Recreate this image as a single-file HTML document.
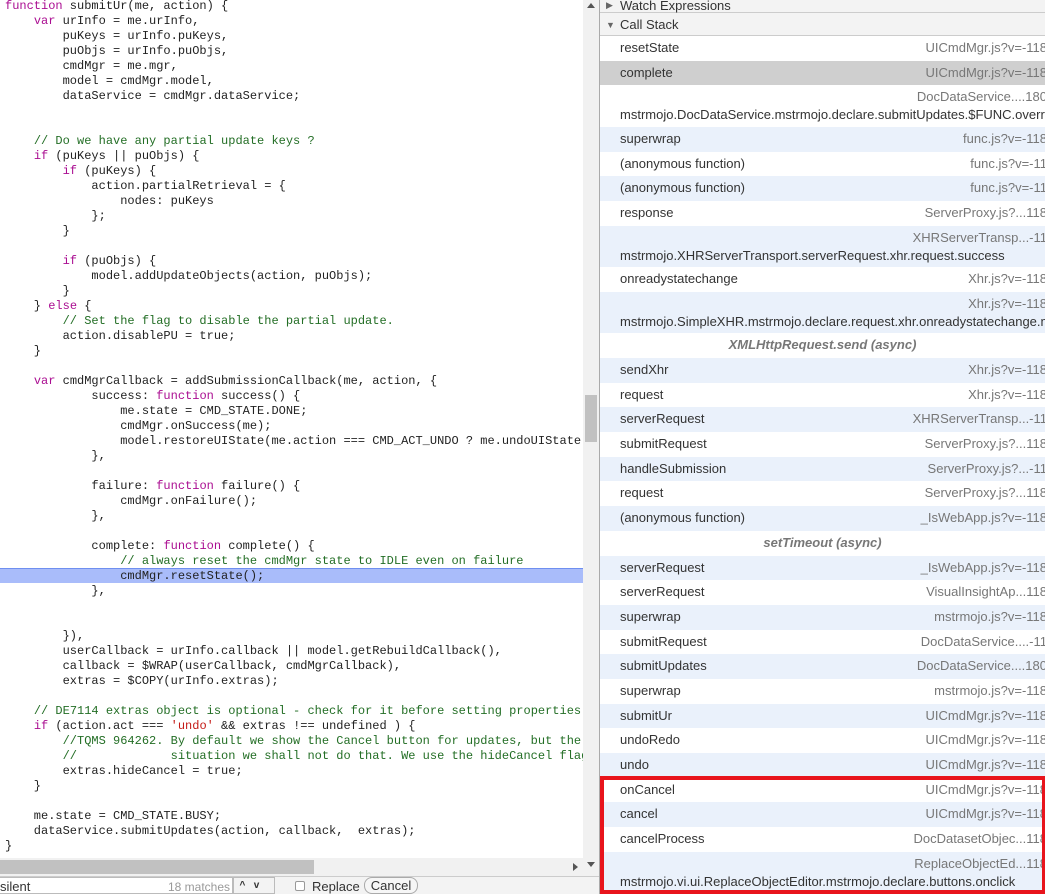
<!DOCTYPE html>
<html><head><meta charset="utf-8"><style>
*{margin:0;padding:0;box-sizing:border-box}
body{width:1045px;height:894px;overflow:hidden;background:#fff;position:relative;font-family:"Liberation Sans",sans-serif}
#code{position:absolute;left:0;top:0;width:583px;height:858px;overflow:hidden}
pre{position:absolute;left:5px;top:-1.5px;font:12px/15px "Liberation Mono",monospace;color:#222;white-space:pre}
.k{color:#aa0d91}.c{color:#236e25}.s{color:#c41a16}
#hl{position:absolute;left:0;top:568px;width:583px;height:15px;background:#a9bcfa;border-top:1px solid #6f8ff0}
#vs{position:absolute;left:583px;top:0;width:16px;height:876px;background:#f1f1f1}
#vs .t{position:absolute;left:2px;top:395px;width:12px;height:47px;background:#c1c1c1}
#hs{position:absolute;left:0;top:858px;width:583px;height:18px;background:#f1f1f1}
#hs .t{position:absolute;left:0;top:2px;width:314px;height:14px;background:#c1c1c1}
#sb{position:absolute;left:0;top:876px;width:599px;height:18px;background:#f3f3f3;border-top:1px solid #ccc;font-size:12px;color:#333}
#panel{position:absolute;left:599px;top:0;width:446px;height:894px;border-left:1px solid #aaa;font-size:13px;color:#333}
.hd{height:13px;background:#f3f3f3;border-bottom:1px solid #ccc;padding-left:20px;line-height:11px;position:relative}
.hd2{height:23px;background:#f3f3f3;border-bottom:1px solid #ccc;padding-left:20px;line-height:24px;position:relative}
.r{position:relative;height:24.7px;line-height:24.7px;padding-left:20px;white-space:nowrap;overflow:hidden}
.r .f{position:absolute;right:-2px;top:0;color:#777}
.d{position:relative;height:41.5px;white-space:nowrap;overflow:hidden}
.d .f{position:absolute;right:-2px;top:3px;color:#777;line-height:18px}
.d .n{position:absolute;left:20px;top:21px;line-height:18px}
.b{background:#eaf1fb}.w{background:#fff}.g{background:#cfcfcf}
.a{text-align:center;color:#777;font-style:italic;font-weight:bold;padding-left:0}
#red{position:absolute;left:600px;top:776px;width:445px;height:118px;border:4px solid #e8141c;border-right-width:3px}
</style></head><body>
<div id="code">
<div id="hl"></div>
<pre><span class="k">function</span> submitUr(me, action) {
    <span class="k">var</span> urInfo = me.urInfo,
        puKeys = urInfo.puKeys,
        puObjs = urInfo.puObjs,
        cmdMgr = me.mgr,
        model = cmdMgr.model,
        dataService = cmdMgr.dataService;


    <span class="c">// Do we have any partial update keys ?</span>
    <span class="k">if</span> (puKeys || puObjs) {
        <span class="k">if</span> (puKeys) {
            action.partialRetrieval = {
                nodes: puKeys
            };
        }

        <span class="k">if</span> (puObjs) {
            model.addUpdateObjects(action, puObjs);
        }
    } <span class="k">else</span> {
        <span class="c">// Set the flag to disable the partial update.</span>
        action.disablePU = true;
    }

    <span class="k">var</span> cmdMgrCallback = addSubmissionCallback(me, action, {
            success: <span class="k">function</span> success() {
                me.state = CMD_STATE.DONE;
                cmdMgr.onSuccess(me);
                model.restoreUIState(me.action === CMD_ACT_UNDO ? me.undoUIState : me.redoUIState);
            },

            failure: <span class="k">function</span> failure() {
                cmdMgr.onFailure();
            },

            complete: <span class="k">function</span> complete() {
                <span class="c">// always reset the cmdMgr state to IDLE even on failure</span>
                cmdMgr.resetState();
            },


        }),
        userCallback = urInfo.callback || model.getRebuildCallback(),
        callback = $WRAP(userCallback, cmdMgrCallback),
        extras = $COPY(urInfo.extras);

    <span class="c">// DE7114 extras object is optional - check for it before setting properties</span>
    <span class="k">if</span> (action.act === <span class="s">'undo'</span> &amp;&amp; extras !== undefined ) {
        <span class="c">//TQMS 964262. By default we show the Cancel button for updates, but the</span>
        <span class="c">//             situation we shall not do that. We use the hideCancel flag</span>
        extras.hideCancel = true;
    }

    me.state = CMD_STATE.BUSY;
    dataService.submitUpdates(action, callback,  extras);
}</pre>
</div>
<div id="vs"><div style="position:absolute;left:4px;top:3px;border:4px solid transparent;border-bottom:5px solid #555;border-top:0"></div><div class="t"></div><div style="position:absolute;left:4px;top:862px;border:4px solid transparent;border-top:5px solid #555;border-bottom:0"></div></div>
<div id="hs"><div class="t"></div><div style="position:absolute;left:573px;top:5px;border:4px solid transparent;border-left:5px solid #555;border-right:0"></div></div>
<div id="sb">
<div style="position:absolute;left:0;top:0;width:233px;height:17px;background:#fff;border:1px solid #bbb;border-left:0"></div>
<span style="position:absolute;left:0;top:2px;font-size:13px">silent</span>
<span style="position:absolute;left:168px;top:3px;color:#999">18 matches</span>
<div style="position:absolute;left:233px;top:0;width:42px;height:17px;border:1px solid #bbb;background:#f3f3f3;font-size:10px;line-height:15px;font-weight:bold">&nbsp;&nbsp;^&nbsp;&nbsp;&nbsp;v</div>
<div style="position:absolute;left:295px;top:4px;width:10px;height:10px;border:1px solid #999;border-radius:2px;background:#fff"></div>
<span style="position:absolute;left:312px;top:2px;font-size:13px">Replace</span>
<div style="position:absolute;left:364px;top:0;width:54px;height:17px;border:1px solid #aaa;border-radius:8px;font-size:13px;text-align:center;line-height:15px;background:#f6f6f6">Cancel</div>
</div>
<div id="panel">
<div class="hd"><span style="position:absolute;left:6px;font-size:9px;color:#666">&#9654;</span>Watch Expressions</div>
<div class="hd2"><span style="position:absolute;left:6px;font-size:9px;color:#666">&#9660;</span>Call Stack</div>
<div class="r w">resetState<span class="f">UICmdMgr.js?v=-118</span></div>
<div class="r g">complete<span class="f">UICmdMgr.js?v=-118</span></div>
<div class="d w"><span class="f">DocDataService....180</span><span class="n">mstrmojo.DocDataService.mstrmojo.declare.submitUpdates.$FUNC.overriding</span></div>
<div class="r b">superwrap<span class="f">func.js?v=-118</span></div>
<div class="r w">(anonymous function)<span class="f">func.js?v=-11</span></div>
<div class="r b">(anonymous function)<span class="f">func.js?v=-11</span></div>
<div class="r w">response<span class="f">ServerProxy.js?...118</span></div>
<div class="d b"><span class="f">XHRServerTransp...-11</span><span class="n">mstrmojo.XHRServerTransport.serverRequest.xhr.request.success</span></div>
<div class="r w">onreadystatechange<span class="f">Xhr.js?v=-118</span></div>
<div class="d b"><span class="f">Xhr.js?v=-118</span><span class="n">mstrmojo.SimpleXHR.mstrmojo.declare.request.xhr.onreadystatechange.mstr</span></div>
<div class="r w a">XMLHttpRequest.send (async)</div>
<div class="r b">sendXhr<span class="f">Xhr.js?v=-118</span></div>
<div class="r w">request<span class="f">Xhr.js?v=-118</span></div>
<div class="r b">serverRequest<span class="f">XHRServerTransp...-11</span></div>
<div class="r w">submitRequest<span class="f">ServerProxy.js?...118</span></div>
<div class="r b">handleSubmission<span class="f">ServerProxy.js?...-11</span></div>
<div class="r w">request<span class="f">ServerProxy.js?...118</span></div>
<div class="r b">(anonymous function)<span class="f">_IsWebApp.js?v=-118</span></div>
<div class="r w a">setTimeout (async)</div>
<div class="r b">serverRequest<span class="f">_IsWebApp.js?v=-118</span></div>
<div class="r w">serverRequest<span class="f">VisualInsightAp...118</span></div>
<div class="r b">superwrap<span class="f">mstrmojo.js?v=-118</span></div>
<div class="r w">submitRequest<span class="f">DocDataService....-11</span></div>
<div class="r b">submitUpdates<span class="f">DocDataService....180</span></div>
<div class="r w">superwrap<span class="f">mstrmojo.js?v=-118</span></div>
<div class="r b">submitUr<span class="f">UICmdMgr.js?v=-118</span></div>
<div class="r w">undoRedo<span class="f">UICmdMgr.js?v=-118</span></div>
<div class="r b">undo<span class="f">UICmdMgr.js?v=-118</span></div>
<div class="r w">onCancel<span class="f">UICmdMgr.js?v=-118</span></div>
<div class="r b">cancel<span class="f">UICmdMgr.js?v=-118</span></div>
<div class="r w">cancelProcess<span class="f">DocDatasetObjec...118</span></div>
<div class="d b"><span class="f">ReplaceObjectEd...118</span><span class="n">mstrmojo.vi.ui.ReplaceObjectEditor.mstrmojo.declare.buttons.onclick</span></div>
</div>
<div id="red"></div>
</body></html>
